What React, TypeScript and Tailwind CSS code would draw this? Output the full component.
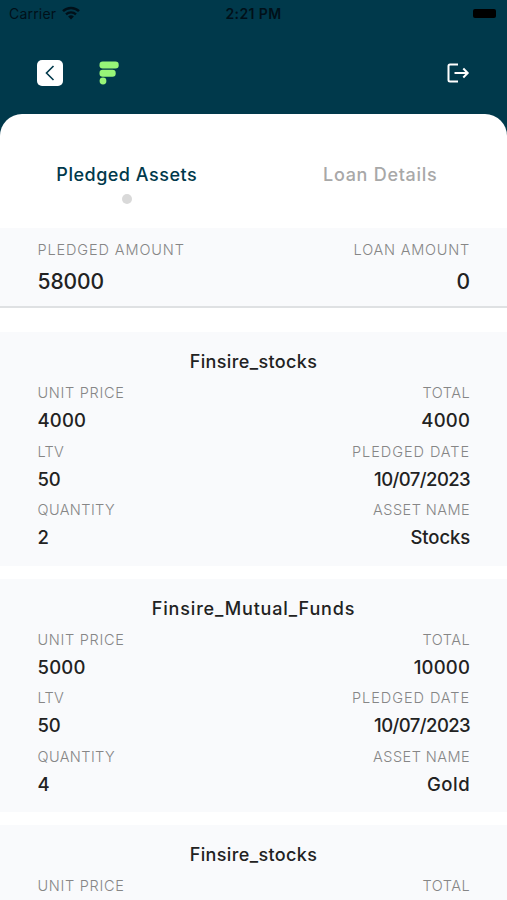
import React, { useState } from "react";

type Field = { label: string; labelClass: string; value: string; valueClass?: string };
type Asset = { name: string; nameClass: string; rows: [Field, Field][] };

const unitPrice = (value: string): Field => ({
  label: "UNIT PRICE",
  labelClass: "tracking-[0.7px]",
  value,
  valueClass: "tracking-[0.2px]",
});

const total = (value: string): Field => ({
  label: "TOTAL",
  labelClass: "tracking-[0.45px]",
  value,
  valueClass: "tracking-[0.2px]",
});

const ltv = (value: string): Field => ({
  label: "LTV",
  labelClass: "tracking-[0.3px]",
  value,
  valueClass: "tracking-[-0.3px]",
});

const pledgedDate = (value: string): Field => ({
  label: "PLEDGED DATE",
  labelClass: "tracking-[0.95px]",
  value,
  valueClass: "tracking-[-0.58px]",
});

const quantity = (value: string): Field => ({
  label: "QUANTITY",
  labelClass: "tracking-[0.4px]",
  value,
});

const assetName = (value: string, valueClass: string): Field => ({
  label: "ASSET NAME",
  labelClass: "tracking-[0.45px]",
  value,
  valueClass,
});

const assets: Asset[] = [
  {
    name: "Finsire_stocks",
    nameClass: "tracking-[0.38px]",
    rows: [
      [unitPrice("4000"), total("4000")],
      [ltv("50"), pledgedDate("10/07/2023")],
      [quantity("2"), assetName("Stocks", "tracking-[-0.1px]")],
    ],
  },
  {
    name: "Finsire_Mutual_Funds",
    nameClass: "tracking-[0.83px]",
    rows: [
      [unitPrice("5000"), total("10000")],
      [ltv("50"), pledgedDate("10/07/2023")],
      [quantity("4"), assetName("Gold", "tracking-[0.5px]")],
    ],
  },
  {
    name: "Finsire_stocks",
    nameClass: "tracking-[0.38px]",
    rows: [
      [unitPrice("4000"), total("4000")],
      [ltv("50"), pledgedDate("10/07/2023")],
      [quantity("2"), assetName("Stocks", "tracking-[-0.1px]")],
    ],
  },
];

const tabs = [
  { name: "Pledged Assets", nameClass: "tracking-[0.5px]" },
  { name: "Loan Details", nameClass: "tracking-[0.72px]" },
];

const StatusBar: React.FC = () => (
  <div className="grid h-[26px] grid-cols-3 items-center px-[9px] text-[14px] text-[#001019]">
    <div className="flex items-center gap-[6px]">
      <span className="tracking-[0.2px]">Carrier</span>
      <svg width="18" height="14" viewBox="0 0 18 14" fill="none" stroke="currentColor">
        <path d="M1 5.2a11.6 11.6 0 0 1 16 0" strokeWidth="2.5" />
        <path d="M4 8.4a7.3 7.3 0 0 1 10 0" strokeWidth="2.3" />
        <path d="M9 13.5 6.1 10.6a4.1 4.1 0 0 1 5.8 0Z" fill="currentColor" stroke="none" />
      </svg>
    </div>
    <span className="text-center font-semibold tracking-[0.4px]">2:21 PM</span>
    <span className="mr-[2px] h-[9px] w-[23px] justify-self-end rounded-[2px] bg-black" />
  </div>
);

const Header: React.FC = () => (
  <div className="flex h-[88px] items-center px-[37px] pt-[6px]">
    <button className="flex h-[26px] w-[26px] items-center justify-center rounded-[5px] bg-white">
      <svg width="10" height="16" viewBox="0 0 10 16" fill="none" stroke="#00394b" strokeWidth="1.6">
        <path d="M8.5 1 1.5 8l7 7" />
      </svg>
    </button>
    <svg className="ml-9" width="20" height="24" viewBox="0 0 20 24" fill="#97f578">
      <rect x="0.5" y="0.5" width="19.2" height="7" rx="3.2" />
      <rect x="0.5" y="8.7" width="16.2" height="7" rx="3.2" />
      <circle cx="4" cy="20" r="3.4" />
    </svg>
    <svg
      className="ml-auto"
      width="24"
      height="20"
      viewBox="0 0 24 20"
      fill="none"
      stroke="#fff"
      strokeWidth="2"
    >
      <path d="M12 1.5H4Q2.500 1.500 2.500 3v14q0 1.500 1.500 1.500h8" />
      <path d="M8.500 10h13M17.300 5.500 21.700 10l-4.400 4.500" />
    </svg>
  </div>
);

const FieldView: React.FC<{ field: Field; right?: boolean }> = ({ field, right }) => (
  <div className={right ? "-mr-[0.6px] text-right" : ""}>
    <div className={`text-[14.5px] leading-6 font-light text-[#868686] ${field.labelClass}`}>
      {field.label}
    </div>
    <div className={`text-[18.5px] leading-[30px] font-medium text-[#222] ${field.valueClass ?? ""}`}>
      {field.value}
    </div>
  </div>
);

const AssetCard: React.FC<{ asset: Asset }> = ({ asset }) => (
  <div className="h-[233.7px] shrink-0 bg-[#f9fafc] px-[37.5px] pt-[10px]">
    <h2 className={`text-center text-[18px] leading-[39px] font-medium text-[#222] ${asset.nameClass}`}>
      {asset.name}
    </h2>
    {asset.rows.map(([left, right]) => (
      <div key={left.label} className="flex h-[58.6px] justify-between">
        <FieldView field={left} />
        <FieldView field={right} right />
      </div>
    ))}
  </div>
);

const App: React.FC = () => {
  const [tab, setTab] = useState(0);

  return (
    <div className="flex h-[900px] w-[507px] flex-col overflow-hidden bg-[#00394b] font-['Inter',sans-serif]">
      <StatusBar />
      <Header />

      <div className="flex min-h-0 flex-1 flex-col overflow-hidden rounded-t-[22px] bg-white">
        {/* Tabs */}
        <div className="grid h-[114px] shrink-0 grid-cols-2 pt-[47px]">
          {tabs.map(({ name, nameClass }, i) => (
            <button
              key={name}
              onClick={() => setTab(i)}
              className={`flex flex-col items-center text-[18px] leading-7 font-medium ${nameClass} ${
                tab === i ? "text-[#00394b]" : "text-[#a8a8a8]"
              }`}
            >
              {name}
              {tab === i && <span className="mt-[5px] h-[10px] w-[10px] rounded-full bg-[#d9d9d9]" />}
            </button>
          ))}
        </div>

        {/* Totals */}
        <div className="flex h-[80px] shrink-0 justify-between border-b-2 border-[#dfe1e3] bg-[#f9fafc] px-[37.5px] pt-[10px]">
          <div>
            <div className="text-[14.5px] leading-6 font-light tracking-[0.88px] text-[#868686]">
              PLEDGED AMOUNT
            </div>
            <div className="text-[21px] leading-[40px] font-medium tracking-[-0.1px] text-[#222]">58000</div>
          </div>
          <div className="-mr-[0.6px] text-right">
            <div className="text-[14.5px] leading-6 font-light tracking-[0.78px] text-[#868686]">
              LOAN AMOUNT
            </div>
            <div className="text-[21px] leading-[40px] font-medium text-[#222]">0</div>
          </div>
        </div>

        {/* Assets */}
        <div className="mt-6 flex flex-col gap-[13px]">
          {assets.map((asset, i) => (
            <AssetCard key={i} asset={asset} />
          ))}
        </div>
      </div>
    </div>
  );
};

export default App;
